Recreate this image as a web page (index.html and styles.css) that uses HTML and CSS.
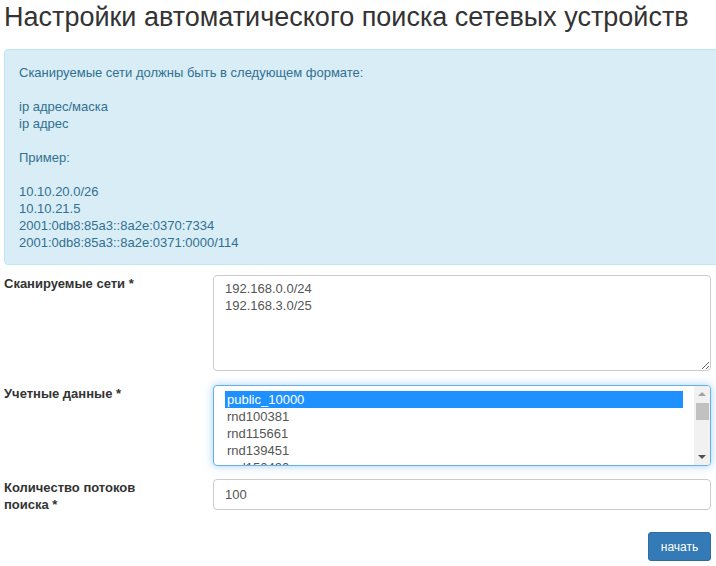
FILE: index.html
```html
<!DOCTYPE html>
<html lang="ru">
<head>
    <meta charset="UTF-8">
    <title>Настройки автоматического поиска</title>
    <link rel="stylesheet" href="styles.css">
</head>
<body>
    <div class="page">
        <h3 class="title">Настройки автоматического поиска сетевых устройств</h3>

        <div class="alert">
            Сканируемые сети должны быть в следующем формате:<br>
            <br>
            ip адрес/маска<br>
            ip адрес<br>
            <br>
            Пример:<br>
            <br>
            10.10.20.0/26<br>
            10.10.21.5<br>
            2001:0db8:85a3::8a2e:0370:7334<br>
            2001:0db8:85a3::8a2e:0371:0000/114
        </div>

        <form class="form">
            <div class="row first">
                <label class="label">Сканируемые сети *</label>
                <textarea class="control area">192.168.0.0/24
192.168.3.0/25</textarea>
            </div>

            <div class="row">
                <label class="label">Учетные данные *</label>
                <div class="control list focused">
                    <div class="options">
                        <div class="opt selected">public_10000</div>
                        <div class="opt">rnd100381</div>
                        <div class="opt">rnd115661</div>
                        <div class="opt">rnd139451</div>
                        <div class="opt">rnd150420</div>
                    </div>
                    <div class="scroll">
                        <span class="arrow up"></span>
                        <span class="thumb"></span>
                        <span class="arrow down"></span>
                    </div>
                </div>
            </div>

            <div class="row">
                <label class="label">Количество потоков поиска *</label>
                <input class="control field" type="text" value="100">
            </div>

            <div class="actions">
                <button type="button" class="btn">начать</button>
            </div>
        </form>
    </div>
</body>
</html>
```

FILE: styles.css
```css
html, body{
    margin: 0;
    overflow: hidden;
    background: #fff;
}

body{
    font-family: "Liberation Sans", Arial, sans-serif;
    font-size: 13px;
    line-height: 17px;
    color: #333;
}

.page{
    padding-left: 4px;
    width: 707px;
}

.title{
    margin: 2px 0 0 0;
    font-size: 27px;
    font-weight: normal;
    line-height: 30px;
    color: #333;
}

.alert{
    margin-top: 17px;
    width: 700px;
    padding: 14px 14px 13px 14px;
    background: #d9edf7;
    border: 1px solid #bce8f1;
    border-radius: 4px;
    color: #31708f;
}

.form{
    margin-top: 10px;
}

.row{
    display: flex;
    align-items: flex-start;
    margin-bottom: 13px;
}

.row.first{
    margin-bottom: 14px;
}

.label{
    flex: 0 0 170px;
    margin-right: 39px;
    font-weight: bold;
}

.control{
    box-sizing: border-box;
    display: block;
    width: 498px;
    margin: 0;
    border: 1px solid #ccc;
    border-radius: 4px;
    font-family: "Liberation Sans", Arial, sans-serif;
    font-size: 13px;
    color: #555;
    background: #fff;
}

.area{
    height: 96px;
    padding: 4px 11px;
    line-height: 17px;
    resize: vertical;
    outline: none;
}

.list{
    height: 81px;
    display: flex;
    overflow: hidden;
}

.focused{
    border-color: #66afe9;
    box-shadow: 0 0 8px rgba(102, 175, 233, .6);
}

.options{
    flex: 1;
    padding: 5px 11px 0 11px;
}

.opt{
    height: 17px;
    line-height: 17px;
    padding-left: 2px;
}

.opt.selected{
    background: #1e90ff;
    color: #fff;
}

.scroll{
    width: 16px;
    background: #f1f1f1;
    display: flex;
    flex-direction: column;
    align-items: center;
}

.arrow{
    width: 0;
    height: 0;
    border-left: 4px solid transparent;
    border-right: 4px solid transparent;
}

.arrow.up{
    margin-top: 6px;
    border-bottom: 4px solid #a3a3a3;
}

.arrow.down{
    margin-top: auto;
    margin-bottom: 6px;
    border-top: 4px solid #505050;
}

.thumb{
    width: 13px;
    height: 17px;
    margin-top: 7px;
    background: #c1c1c1;
}

.field{
    height: 31px;
    padding: 0 11px;
    outline: none;
}

.actions{
    display: flex;
    justify-content: flex-end;
    padding-top: 6px;
}

.btn{
    width: 63px;
    height: 29px;
    background: #337ab7;
    border: 1px solid #2e6da4;
    border-radius: 3px;
    color: #fff;
    font-family: "Liberation Sans", Arial, sans-serif;
    font-size: 12px;
    padding: 0;
}
```
